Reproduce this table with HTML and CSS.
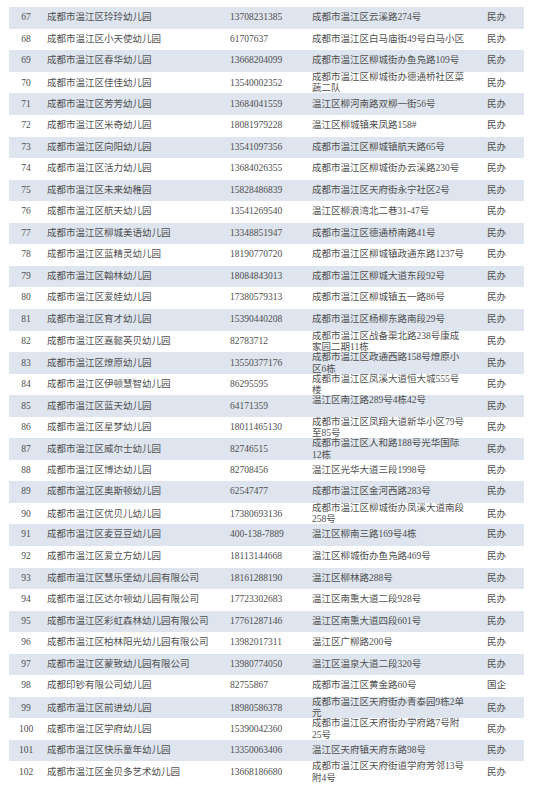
FILE: index.html
```html
<!DOCTYPE html>
<html lang="zh">
<head>
<meta charset="utf-8">
<link rel="stylesheet" href="styles.css">
</head>
<body>
<div class="table">
<div class="row"><div class="c num">67</div><div class="c name">成都市温江区玲玲幼儿园</div><div class="c tel">13708231385</div><div class="c addr"><span>成都市温江区云溪路274号</span></div><div class="c type">民办</div></div>
<div class="row"><div class="c num">68</div><div class="c name">成都市温江区小天使幼儿园</div><div class="c tel">61707637</div><div class="c addr"><span>成都市温江区白马庙街49号白马小区</span></div><div class="c type">民办</div></div>
<div class="row"><div class="c num">69</div><div class="c name">成都市温江区春华幼儿园</div><div class="c tel">13668204099</div><div class="c addr"><span>成都市温江区柳城街办鱼凫路109号</span></div><div class="c type">民办</div></div>
<div class="row"><div class="c num">70</div><div class="c name">成都市温江区佳佳幼儿园</div><div class="c tel">13540002352</div><div class="c addr"><span>成都市温江区柳城街办德通桥社区菜蔬二队</span></div><div class="c type">民办</div></div>
<div class="row"><div class="c num">71</div><div class="c name">成都市温江区芳芳幼儿园</div><div class="c tel">13684041559</div><div class="c addr"><span>温江区柳河南路双柳一街56号</span></div><div class="c type">民办</div></div>
<div class="row"><div class="c num">72</div><div class="c name">成都市温江区米奇幼儿园</div><div class="c tel">18081979228</div><div class="c addr"><span>温江区柳城镇来凤路158#</span></div><div class="c type">民办</div></div>
<div class="row"><div class="c num">73</div><div class="c name">成都市温江区向阳幼儿园</div><div class="c tel">13541097356</div><div class="c addr"><span>成都市温江区柳城镇航天路65号</span></div><div class="c type">民办</div></div>
<div class="row"><div class="c num">74</div><div class="c name">成都市温江区活力幼儿园</div><div class="c tel">13684026355</div><div class="c addr"><span>成都市温江区柳城街办云溪路230号</span></div><div class="c type">民办</div></div>
<div class="row"><div class="c num">75</div><div class="c name">成都市温江区未来幼稚园</div><div class="c tel">15828486839</div><div class="c addr"><span>成都市温江区天府街永宁社区2号</span></div><div class="c type">民办</div></div>
<div class="row"><div class="c num">76</div><div class="c name">成都市温江区航天幼儿园</div><div class="c tel">13541269540</div><div class="c addr"><span>温江区柳浪湾北二巷31-47号</span></div><div class="c type">民办</div></div>
<div class="row"><div class="c num">77</div><div class="c name">成都市温江区柳城美语幼儿园</div><div class="c tel">13348851947</div><div class="c addr"><span>成都市温江区德通桥南路41号</span></div><div class="c type">民办</div></div>
<div class="row"><div class="c num">78</div><div class="c name">成都市温江区蓝精灵幼儿园</div><div class="c tel">18190770720</div><div class="c addr"><span>成都市温江区柳城镇政通东路1237号</span></div><div class="c type">民办</div></div>
<div class="row"><div class="c num">79</div><div class="c name">成都市温江区翰林幼儿园</div><div class="c tel">18084843013</div><div class="c addr"><span>成都市温江区柳城大道东段92号</span></div><div class="c type">民办</div></div>
<div class="row"><div class="c num">80</div><div class="c name">成都市温江区爱娃幼儿园</div><div class="c tel">17380579313</div><div class="c addr"><span>成都市温江区柳城镇五一路86号</span></div><div class="c type">民办</div></div>
<div class="row"><div class="c num">81</div><div class="c name">成都市温江区育才幼儿园</div><div class="c tel">15390440208</div><div class="c addr"><span>成都市温江区杨柳东路南段29号</span></div><div class="c type">民办</div></div>
<div class="row"><div class="c num">82</div><div class="c name">成都市温江区嘉懿英贝幼儿园</div><div class="c tel">82783712</div><div class="c addr"><span>成都市温江区战备渠北路238号康成家园二期11栋</span></div><div class="c type">民办</div></div>
<div class="row"><div class="c num">83</div><div class="c name">成都市温江区燎原幼儿园</div><div class="c tel">13550377176</div><div class="c addr"><span>成都市温江区政通西路158号燎原小区6栋</span></div><div class="c type">民办</div></div>
<div class="row"><div class="c num">84</div><div class="c name">成都市温江区伊顿慧智幼儿园</div><div class="c tel">86295595</div><div class="c addr"><span>成都市温江区凤溪大道恒大城555号楼</span></div><div class="c type">民办</div></div>
<div class="row"><div class="c num">85</div><div class="c name">成都市温江区蓝天幼儿园</div><div class="c tel">64171359</div><div class="c addr"><span>温江区南江路289号4栋42号<br>&nbsp;</span></div><div class="c type">民办</div></div>
<div class="row"><div class="c num">86</div><div class="c name">成都市温江区星梦幼儿园</div><div class="c tel">18011465130</div><div class="c addr"><span>成都市温江区凤翔大道新华小区79号至85号</span></div><div class="c type">民办</div></div>
<div class="row"><div class="c num">87</div><div class="c name">成都市温江区威尔士幼儿园</div><div class="c tel">82746515</div><div class="c addr"><span>成都市温江区人和路188号光华国际12栋</span></div><div class="c type">民办</div></div>
<div class="row"><div class="c num">88</div><div class="c name">成都市温江区博达幼儿园</div><div class="c tel">82708456</div><div class="c addr"><span>温江区光华大道三段1998号</span></div><div class="c type">民办</div></div>
<div class="row"><div class="c num">89</div><div class="c name">成都市温江区奥斯顿幼儿园</div><div class="c tel">62547477</div><div class="c addr"><span>成都市温江区金河西路283号</span></div><div class="c type">民办</div></div>
<div class="row"><div class="c num">90</div><div class="c name">成都市温江区优贝儿幼儿园</div><div class="c tel">17380693136</div><div class="c addr"><span>成都市温江区柳城街办凤溪大道南段258号</span></div><div class="c type">民办</div></div>
<div class="row"><div class="c num">91</div><div class="c name">成都市温江区麦豆豆幼儿园</div><div class="c tel">400-138-7889</div><div class="c addr"><span>温江区柳南三路169号4栋</span></div><div class="c type">民办</div></div>
<div class="row"><div class="c num">92</div><div class="c name">成都市温江区爱立方幼儿园</div><div class="c tel">18113144668</div><div class="c addr"><span>温江区柳城街办鱼凫路469号</span></div><div class="c type">民办</div></div>
<div class="row"><div class="c num">93</div><div class="c name">成都市温江区慧乐堡幼儿园有限公司</div><div class="c tel">18161288190</div><div class="c addr"><span>温江区柳林路288号</span></div><div class="c type">民办</div></div>
<div class="row"><div class="c num">94</div><div class="c name">成都市温江区达尔顿幼儿园有限公司</div><div class="c tel">17723302683</div><div class="c addr"><span>温江区南熏大道二段928号</span></div><div class="c type">民办</div></div>
<div class="row"><div class="c num">95</div><div class="c name">成都市温江区彩虹森林幼儿园有限公司</div><div class="c tel">17761287146</div><div class="c addr"><span>温江区南熏大道四段601号</span></div><div class="c type">民办</div></div>
<div class="row"><div class="c num">96</div><div class="c name">成都市温江区柏林阳光幼儿园有限公司</div><div class="c tel">13982017311</div><div class="c addr"><span>温江区广柳路200号</span></div><div class="c type">民办</div></div>
<div class="row"><div class="c num">97</div><div class="c name">成都市温江区蒙致幼儿园有限公司</div><div class="c tel">13980774050</div><div class="c addr"><span>温江区温泉大道二段320号</span></div><div class="c type">民办</div></div>
<div class="row"><div class="c num">98</div><div class="c name">成都印钞有限公司幼儿园</div><div class="c tel">82755867</div><div class="c addr"><span>成都市温江区黄金路60号</span></div><div class="c type">国企</div></div>
<div class="row"><div class="c num">99</div><div class="c name">成都市温江区前进幼儿园</div><div class="c tel">18980586378</div><div class="c addr"><span>成都市温江区天府街办青泰园9栋2单元</span></div><div class="c type">民办</div></div>
<div class="row"><div class="c num">100</div><div class="c name">成都市温江区学府幼儿园</div><div class="c tel">15390042360</div><div class="c addr"><span>成都市温江区天府街办学府路7号附25号</span></div><div class="c type">民办</div></div>
<div class="row"><div class="c num">101</div><div class="c name">成都市温江区快乐童年幼儿园</div><div class="c tel">13350063406</div><div class="c addr"><span>温江区天府镇天府东路98号</span></div><div class="c type">民办</div></div>
<div class="row"><div class="c num">102</div><div class="c name">成都市温江区金贝多艺术幼儿园</div><div class="c tel">13668186680</div><div class="c addr"><span>成都市温江区天府街道学府芳邻13号附4号</span></div><div class="c type">民办</div></div>
</div>
</body>
</html>
```
FILE: styles.css
```css
html, body {
  margin: 0;
  padding: 0;
  background: #ffffff;
}
body {
  font-family: "Liberation Serif", "Noto Sans CJK SC", serif;
  font-size: 9.5px;
  color: #4f4f4f;
}
.table {
  padding: 7.3px 11px 0 9px;
  display: flex;
  flex-direction: column;
}
.row {
  display: grid;
  grid-template-columns: 34px 183px 82px 175px 41px;
  height: 21.55px;
}
.row:nth-child(odd) {
  background: #dee5ee;
}
.c {
  display: flex;
  align-items: center;
  line-height: 11.5px;
  white-space: nowrap;
}
.num {
  justify-content: center;
}
.name, .tel, .type {
  padding-left: 4px;
}
.addr {
  padding-left: 4px;
  white-space: normal;
}
.addr span {
  display: block;
  width: 153px;
}
```
